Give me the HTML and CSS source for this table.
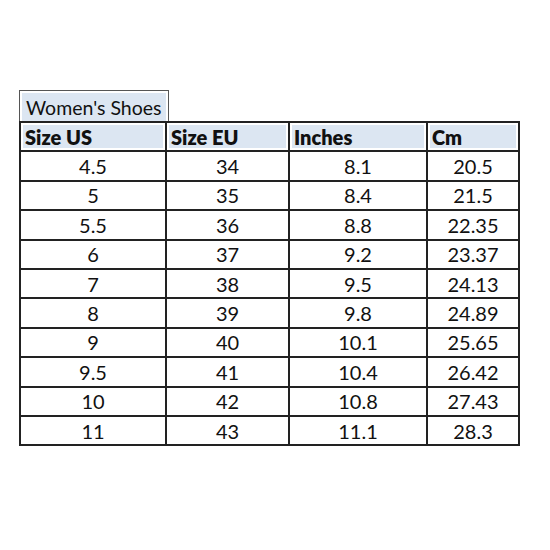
FILE: index.html
```html
<!DOCTYPE html>
<html>
<head>
<meta charset="utf-8">
<link rel="stylesheet" href="styles.css">
</head>
<body>
<div class="wrap">
  <div class="title"><span>Women's Shoes</span></div>
  <table class="sizes">
    <colgroup>
      <col class="c1"><col class="c2"><col class="c3"><col class="c4">
    </colgroup>
    <thead>
      <tr><th>Size US</th><th>Size EU</th><th>Inches</th><th>Cm</th></tr>
    </thead>
    <tbody>
      <tr><td>4.5</td><td>34</td><td>8.1</td><td>20.5</td></tr>
      <tr><td>5</td><td>35</td><td>8.4</td><td>21.5</td></tr>
      <tr><td>5.5</td><td>36</td><td>8.8</td><td>22.35</td></tr>
      <tr><td>6</td><td>37</td><td>9.2</td><td>23.37</td></tr>
      <tr><td>7</td><td>38</td><td>9.5</td><td>24.13</td></tr>
      <tr><td>8</td><td>39</td><td>9.8</td><td>24.89</td></tr>
      <tr><td>9</td><td>40</td><td>10.1</td><td>25.65</td></tr>
      <tr><td>9.5</td><td>41</td><td>10.4</td><td>26.42</td></tr>
      <tr><td>10</td><td>42</td><td>10.8</td><td>27.43</td></tr>
      <tr><td>11</td><td>43</td><td>11.1</td><td>28.3</td></tr>
    </tbody>
  </table>
</div>
</body>
</html>
```
FILE: styles.css
```css
html, body {
  margin: 0;
  padding: 0;
  background: #fff;
}
body {
  font-family: Lato, "Open Sans", sans-serif;
  color: #111;
}
.wrap {
  padding: 90px 0 0 19px;
}
.title {
  width: 150px;
  height: 31px;
  box-sizing: border-box;
  border: 1px solid #555;
  border-bottom: none;
  padding: 2px 2px 0 2px;
  background: #fff;
}
.title span {
  display: block;
  height: 29px;
  background: #dce6f2;
  font-size: 19.5px;
  line-height: 29px;
  padding-left: 4px;
}
.sizes {
  border-collapse: collapse;
  border: 2px solid #222;
  table-layout: fixed;
  width: 499px;
}
.c1 { width: 146px; }
.c2 { width: 123px; }
.c3 { width: 138px; }
.c4 { width: 92px; }
.sizes th, .sizes td {
  border: 2px solid #222;
  height: 27.4px;
  padding: 0;
  font-size: 20px;
}
.sizes th {
  text-align: left;
  font-weight: 800;
  background: #dce6f2;
  box-shadow: inset 0 0 0 2px #fff;
  padding-left: 4px;
  border-top-width: 1.5px;
}
.sizes td {
  text-align: center;
  line-height: 26px;
}
```
